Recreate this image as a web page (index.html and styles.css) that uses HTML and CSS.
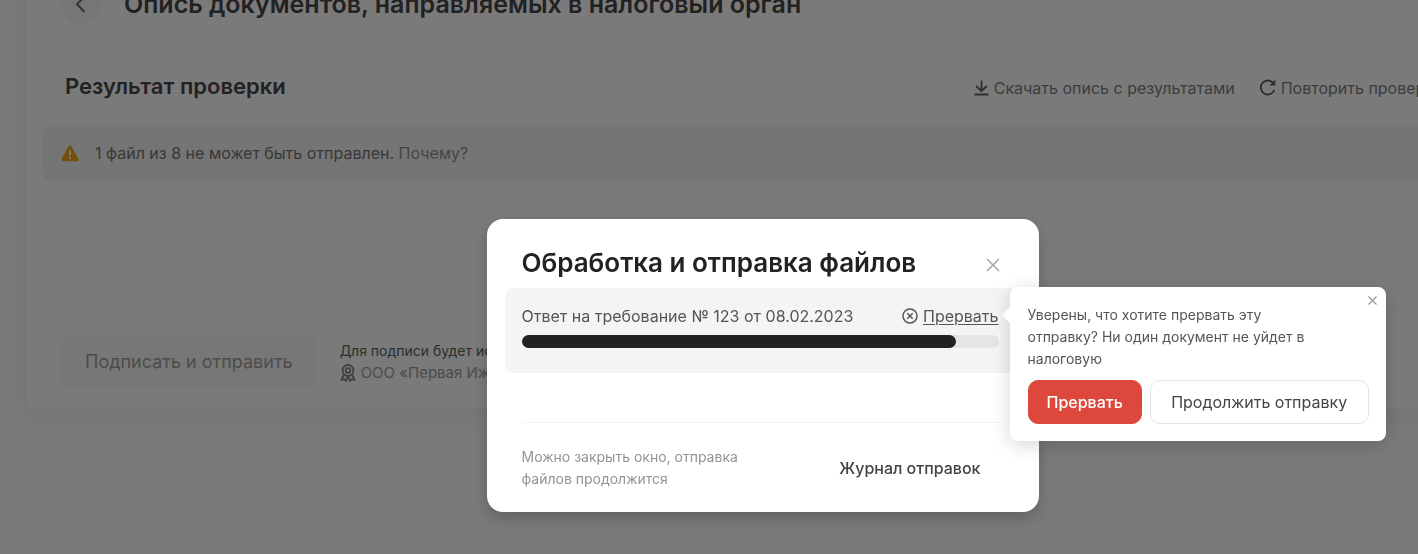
FILE: index.html
```html
<!DOCTYPE html>
<html lang="ru">
<head>
<meta charset="utf-8">
<meta name="viewport" content="width=device-width, initial-scale=1">
<title>Опись документов, направляемых в налоговый орган</title>
<link rel="stylesheet" href="styles.css">
</head>
<body>
<div class="page">
  <main class="card">
    <header class="card-header">
      <button class="back" type="button" aria-label="Назад">
        <svg width="12" height="20" viewBox="0 0 12 20"><path d="M9.500 2.500 2 10.300 9.500 18" fill="none" stroke="currentColor" stroke-width="2"/></svg>
      </button>
      <h1 class="card-title">Опись документов, направляемых в налоговый орган</h1>
    </header>
    <section class="results">
      <div class="results-head">
        <h2 class="results-title">Результат проверки</h2>
        <div class="tools">
          <button class="tool" type="button">
            <svg width="15" height="16" viewBox="0 0 15 16" fill="none" stroke="currentColor" stroke-width="1.800"><path d="M7.500 0.500V11M2 6l5.500 5L13 6M0.500 14.500h14"/></svg>
            Скачать опись с результатами
          </button>
          <button class="tool" type="button">
            <svg width="17" height="18" viewBox="0 0 17 18" fill="none" stroke="currentColor" stroke-width="1.800"><path d="M14.300 4.200A7 7 0 1 0 15.300 11"/><path d="M16.300 0.500V6.500H10.500z" fill="currentColor" stroke="none"/></svg>
            Повторить проверку
          </button>
        </div>
      </div>
      <div class="notice">
        <svg width="18" height="17" viewBox="0 0 18 17"><path d="M9 2 16.200 14.800H1.800z" fill="#f5a31a" stroke="#f5a31a" stroke-width="3" stroke-linejoin="round"/><path d="M9 5.200v5.300M9 12v2" stroke="#fff" stroke-width="1.800"/></svg>
        <p class="notice-text">1 файл из 8 не может быть отправлен. <a class="why" href="#why">Почему?</a></p>
      </div>
    </section>
    <footer class="card-footer">
      <button class="sign" type="button" disabled>Подписать и отправить</button>
      <div class="signer">
        <p class="signer-note">Для подписи будет использован сертификат</p>
        <p class="signer-org">
          <svg width="16" height="18" viewBox="0 0 16 18" fill="none" stroke="currentColor" stroke-width="1.800"><circle cx="8" cy="6.500" r="5.500"/><circle cx="8" cy="6.500" r="2.300"/><path d="M4 10.500 1.500 15.500 4.500 15.300 6 17 8 12.500 10 17 11.500 15.300 14.500 15.500 12 10.500"/></svg>
          ООО «Первая Ижевская»
        </p>
      </div>
    </footer>
  </main>
</div>
<div class="overlay">
  <div class="modal" role="dialog" aria-labelledby="modal-title">
    <div class="modal-head">
      <h2 class="modal-title" id="modal-title">Обработка и отправка файлов</h2>
      <button class="close" type="button" aria-label="Закрыть окно">
        <svg width="14" height="14" viewBox="0 0 14 14"><path d="M1 1l12 12M13 1 1 13" stroke="currentColor" stroke-width="1.600"/></svg>
      </button>
    </div>
    <div class="task">
      <div class="task-row">
        <span class="task-name" id="task-name">Ответ на требование № 123 от 08.02.2023</span>
        <div class="abort-wrap">
          <button class="abort" type="button">
            <svg width="16" height="16" viewBox="0 0 16 16" fill="none" stroke="currentColor" stroke-width="1.500"><circle cx="8" cy="8" r="7"/><path d="M5.300 5.300l5.400 5.400M10.700 5.300l-5.400 5.400"/></svg>
            <span class="abort-text">Прервать</span>
          </button>
          <div class="popover" role="alertdialog" aria-labelledby="ask">
            <p class="ask" id="ask">Уверены, что хотите прервать эту отправку? Ни один документ не уйдет в налоговую</p>
            <div class="actions">
              <button class="btn btn-danger" type="button">Прервать</button>
              <button class="btn btn-plain" type="button">Продолжить отправку</button>
            </div>
            <button class="popover-close" type="button" aria-label="Закрыть подсказку">
              <svg width="9" height="9" viewBox="0 0 9 9"><path d="M.5.5l8 8M8.500.5l-8 8" stroke="currentColor" stroke-width="1.300"/></svg>
            </button>
          </div>
        </div>
      </div>
      <div class="track" role="progressbar" aria-labelledby="task-name" aria-valuenow="91" aria-valuemin="0" aria-valuemax="100"><div class="fill" style="width:91%"></div></div>
    </div>
    <div class="modal-foot">
      <p class="hint">Можно закрыть окно, отправка файлов продолжится</p>
      <button class="journal" type="button">Журнал отправок</button>
    </div>
  </div>
</div>
</body>
</html>
```
FILE: styles.css
```css
* { box-sizing: border-box; }
html, body { height: 100%; }
body {
  margin: 0;
  overflow: hidden;
  background: #fcfcfc;
  color: #484848;
  font: 16px/22px Inter, "Noto Sans", sans-serif;
}
h1, h2, p { margin: 0; }
button {
  padding: 0;
  border: 0;
  background: none;
  color: inherit;
  font: inherit;
  cursor: pointer;
}
svg { display: block; flex: none; }

/* Scrolled document behind the dialog */
.page { height: 100%; overflow: hidden; }
.card {
  margin: -40px -104px 0 24px;
  padding: 0 36px 20px;
  border: 1px solid #f4f4f4;
  border-radius: 14px;
  background: #fff;
  box-shadow: 0 10px 20px rgba(0, 0, 0, .03);
}
.card-header {
  display: flex;
  align-items: center;
  gap: 23px;
  height: 82px;
  padding-top: 5px;
  border-bottom: 1px solid #f4f4f4;
}
.back {
  display: grid;
  place-items: center;
  width: 40px;
  height: 40px;
  border-radius: 50%;
  background: #f6f6f6;
  color: #707070;
}
.card-title { font-size: 25px; line-height: 32px; font-weight: 600; white-space: nowrap; }
.results-head {
  display: flex;
  align-items: center;
  justify-content: space-between;
  height: 82px;
  padding: 4px 42px 0 4px;
}
.results-title { font-size: 22px; line-height: 30px; font-weight: 600; }
.tools { display: flex; gap: 24px; padding-top: 4px; }
.tool {
  display: flex;
  align-items: center;
  gap: 5px;
  color: #808080;
  white-space: nowrap;
}
.tool svg { color: #606060; }
.notice {
  display: flex;
  align-items: center;
  gap: 16px;
  height: 56px;
  margin: 0 -18px;
  padding: 0 18px;
  border-radius: 8px;
  background: #f5f5f5;
}
.notice-text { color: #747474; }
.why { color: #909090; text-decoration: none; }
.card-footer {
  display: flex;
  align-items: center;
  gap: 23px;
  margin-top: 127px;
  padding-top: 26px;
  border-top: 1px solid #f4f4f4;
}
.sign {
  height: 54px;
  padding: 0 24px;
  border-radius: 10px;
  background: #f8f8f8;
  color: #a0a0a0;
  font-size: 18px;
}
.signer { font-size: 14px; white-space: nowrap; }
.signer-note { color: #606060; }
.signer-org { display: flex; align-items: center; gap: 5px; color: #a0a0a0; font-size: 15px; }
.signer-org svg { color: #888; }

/* Dialog */
.overlay {
  position: fixed;
  inset: 0;
  display: flex;
  align-items: flex-start;
  justify-content: center;
  padding: 219px 0 0 107px;
  background: rgba(0, 0, 0, .52);
}
.modal {
  width: 552px;
  padding: 28px 18px 22px;
  border-radius: 16px;
  background: #fff;
  box-shadow: 0 6px 16px rgba(0, 0, 0, .2);
  color: #222;
}
.modal-head {
  display: flex;
  align-items: center;
  justify-content: space-between;
  padding: 0 21px 9px 17px;
}
.modal-title { font-size: 26px; line-height: 32px; font-weight: 600; white-space: nowrap; }
.close { padding: 4px 0 0; color: #aaa; }
.task { padding: 17px 22px 25px 17px; border-radius: 8px; background: #f4f4f4; }
.task-row {
  display: flex;
  justify-content: space-between;
  margin-bottom: 8px;
  color: #555;
  white-space: nowrap;
}
.abort-wrap { position: relative; }
.abort { display: flex; align-items: center; gap: 5px; }
.abort-text { text-decoration: underline; text-underline-offset: 2px; }
.track { height: 13px; border-radius: 7px; background: #e5e5e5; }
.fill { height: 100%; border-radius: 7px; background: #222; }
.modal-foot {
  display: flex;
  align-items: center;
  justify-content: space-between;
  margin: 49px 22px 0 17px;
  padding: 23px 18px 0 0;
  border-top: 1px solid #f2f2f2;
}
.hint { width: 240px; color: #949494; font-size: 14px; }
.journal { color: #444; font-weight: 500; }

/* Confirmation popover beside the abort link */
.popover {
  position: absolute;
  top: -18px;
  left: calc(100% + 11px);
  width: 376px;
  padding: 17px 17px 17px 18px;
  border-radius: 8px;
  background: #fff;
  box-shadow: 0 4px 20px rgba(0, 0, 0, .16);
  white-space: normal;
}
.popover::before {
  content: "";
  position: absolute;
  top: 20px;
  left: -8px;
  border: solid transparent;
  border-width: 8px 8px 8px 0;
  border-right-color: #fff;
}
.ask { width: 300px; font-size: 14px; }
.actions { display: flex; gap: 8px; margin-top: 10px; white-space: nowrap; }
.btn { height: 44px; padding: 0 18px; border: 1px solid #e2e2e2; border-radius: 10px; }
.btn-danger { border-color: #dd473c; background: #dd473c; color: #fff; font-weight: 500; }
.btn-plain { flex: 1; background: #fff; color: #444; }
.popover-close { position: absolute; top: 9px; right: 9px; color: #999; }
```
